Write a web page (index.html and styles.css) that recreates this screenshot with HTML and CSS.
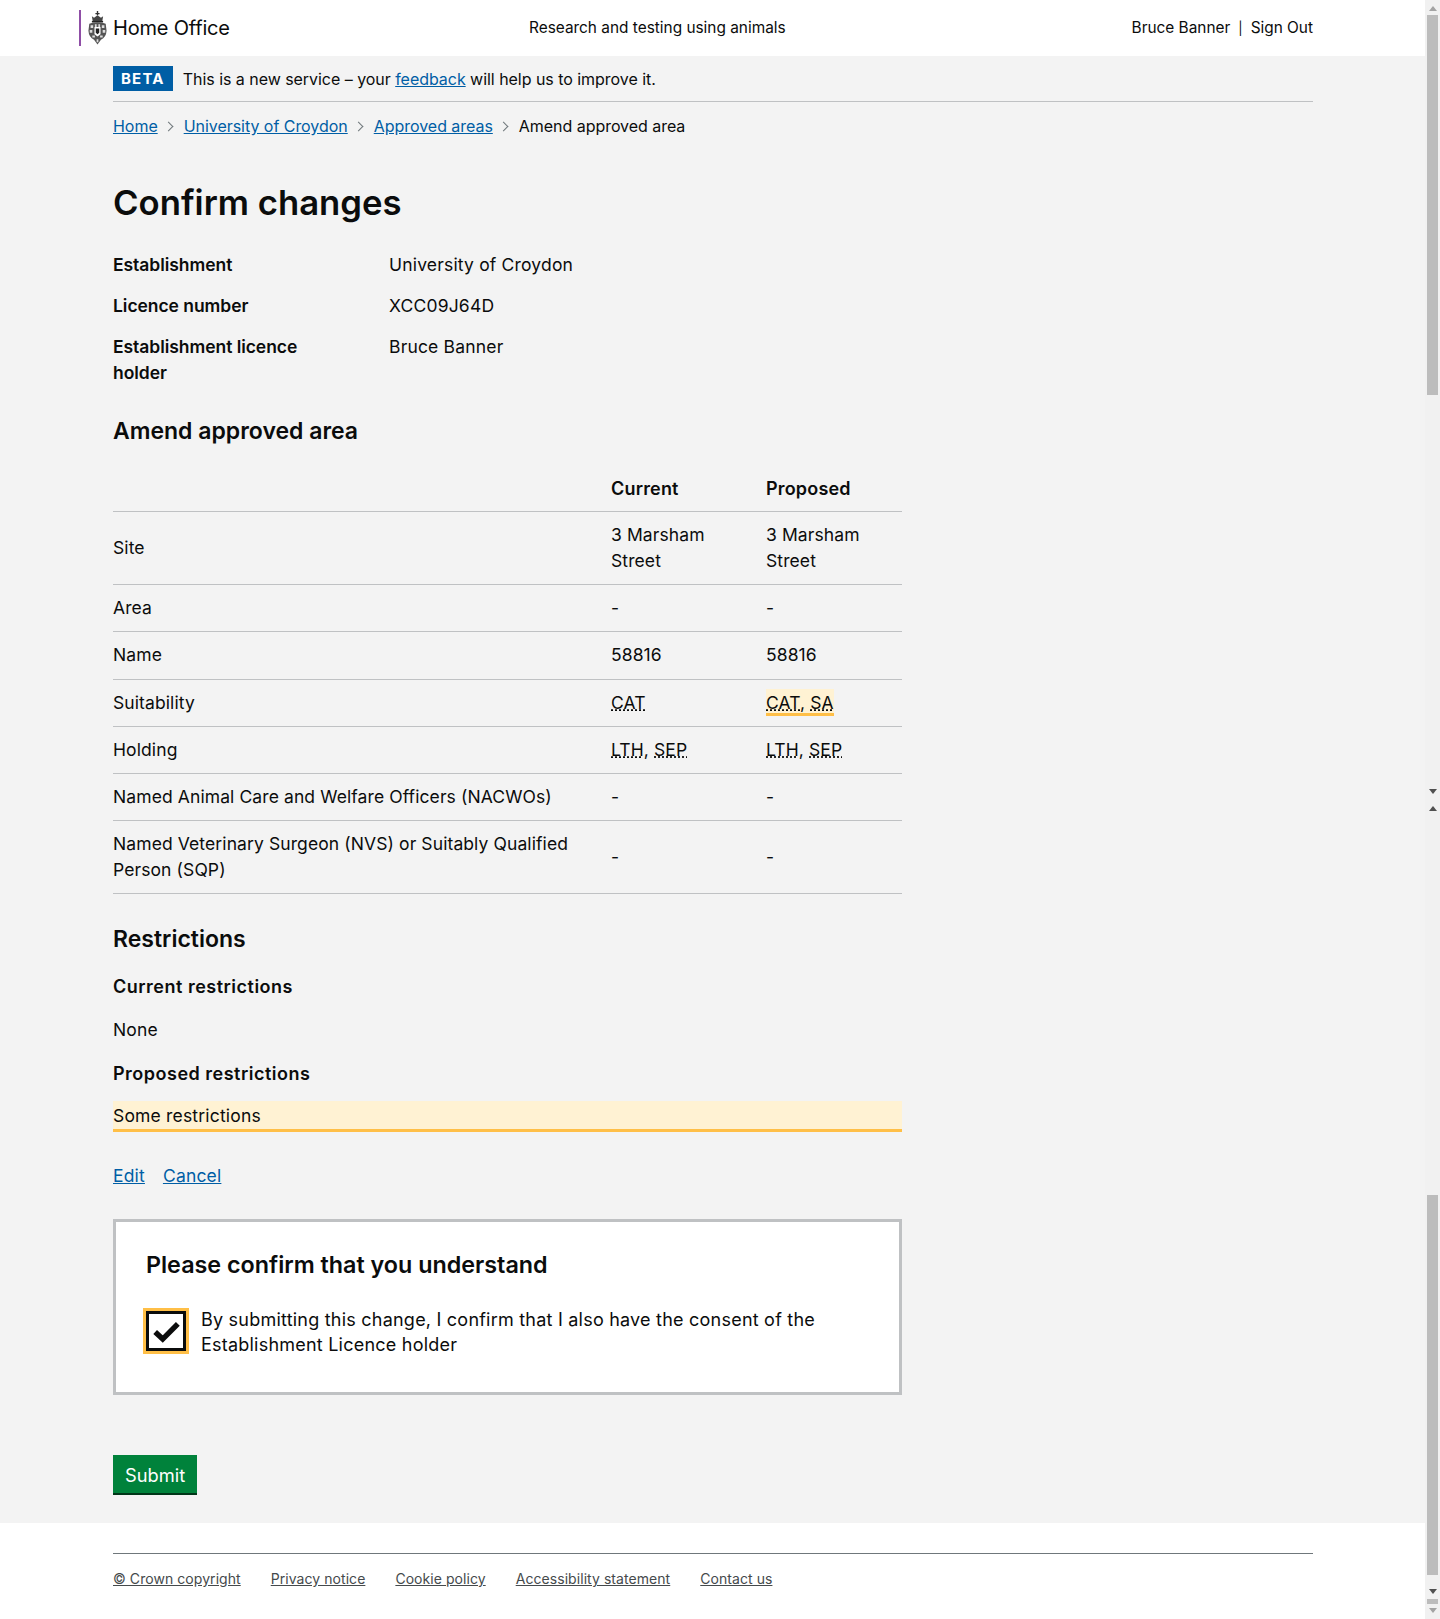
FILE: index.html
```html
<!DOCTYPE html>
<html lang="en">
<head>
  <meta charset="UTF-8" />
  <meta name="viewport" content="width=device-width, initial-scale=1.0"/>
  <title>Confirm changes</title>
  <link rel="stylesheet" href="styles.css">
</head>
<body>
<div class="page">

  <!-- HEADER -->
  <header class="site-header">
    <a href="#" class="logo">
      <svg class="crest" width="19" height="34" viewBox="0 0 22 36" preserveAspectRatio="none" aria-hidden="true">
        <path d="M10.2 0h1.6v2h1.6v1.4h-1.6v1.2h-1.6V3.4H8.6V2h1.6z" fill="#333"/>
        <path d="M4.5 5.5l2.5 1.6L11 4.6l4 2.5 2.5-1.6-1 5.5h-11z" fill="#444"/>
        <rect x="4.5" y="10.5" width="13" height="1.6" fill="#222"/>
        <path d="M1.5 13.5Q11 10.5 20.5 13.5L21.5 21Q21 28 15 30.5L11 35.5 7 30.5Q1 28 .5 21z" fill="#555"/>
        <path d="M3 15h3v3H3zm5-1h2v3H8zm4 0h2v3h-2zm4 1h3v3h-3zM2 20h3v3H2zm15 0h3v3h-3zM5 26h3v2H5zm9 0h3v2h-3zM10 30h2v3h-2z" fill="#ddd"/>
        <path d="M7.5 17h7v7.5L11 27l-3.500-2.500z" fill="#fff"/>
        <path d="M9 18.500h4v4.500l-2 1.500-2-1.500z" fill="#222"/>
      </svg>
      <span>Home Office</span>
    </a>
    <div class="service-name">Research and testing using animals</div>
    <div class="user-nav"><span>Bruce Banner</span><span class="sep">|</span><a href="#">Sign Out</a></div>
  </header>

  <main class="wrapper">
    <div class="phase-banner">
      <strong class="phase-tag">BETA</strong>
      <span>This is a new service – your <a href="#">feedback</a> will help us to improve it.</span>
    </div>

    <nav class="breadcrumbs">
      <a href="#">Home</a><i class="chevron"></i>
      <a href="#">University of Croydon</a><i class="chevron"></i>
      <a href="#">Approved areas</a><i class="chevron"></i>
      <span>Amend approved area</span>
    </nav>

    <h1>Confirm changes</h1>

    <dl class="details">
      <dt>Establishment</dt><dd>University of Croydon</dd>
      <dt>Licence number</dt><dd>XCC09J64D</dd>
      <dt>Establishment licence holder</dt><dd>Bruce Banner</dd>
    </dl>

    <div class="column">
      <h2>Amend approved area</h2>

      <table class="diff">
        <thead>
          <tr><th></th><th>Current</th><th>Proposed</th></tr>
        </thead>
        <tbody>
          <tr><td>Site</td><td>3 Marsham Street</td><td>3 Marsham Street</td></tr>
          <tr><td>Area</td><td>-</td><td>-</td></tr>
          <tr class="name-row"><td>Name</td><td>58816</td><td>58816</td></tr>
          <tr><td>Suitability</td><td><abbr>CAT</abbr></td><td><span class="highlight"><abbr>CAT</abbr>, <abbr>SA</abbr></span></td></tr>
          <tr><td>Holding</td><td><abbr>LTH</abbr>, <abbr>SEP</abbr></td><td><abbr>LTH</abbr>, <abbr>SEP</abbr></td></tr>
          <tr><td>Named Animal Care and Welfare Officers (NACWOs)</td><td>-</td><td>-</td></tr>
          <tr><td>Named Veterinary Surgeon (NVS) or Suitably Qualified Person (SQP)</td><td>-</td><td>-</td></tr>
        </tbody>
      </table>

      <h2 class="restrictions-title">Restrictions</h2>
      <h3>Current restrictions</h3>
      <p class="restriction">None</p>
      <h3>Proposed restrictions</h3>
      <p class="restriction-changed">Some restrictions</p>

      <div class="actions">
        <a href="#">Edit</a>
        <a href="#">Cancel</a>
      </div>

      <section class="declaration">
        <h2>Please confirm that you understand</h2>
        <label class="check">
          <span class="check-box">
            <svg width="27" height="23" viewBox="0 0 25 21" aria-hidden="true"><path d="M2 11l7 6.500L23 3.500" fill="none" stroke="#0b0c0c" stroke-width="5"/></svg>
          </span>
          <span class="check-text">By submitting this change, I confirm that I also have the consent of the Establishment Licence holder</span>
        </label>
      </section>

      <button type="submit" class="submit">Submit</button>
    </div>
  </main>

  <!-- FOOTER -->
  <footer class="site-footer">
    <div class="footer-links">
      <a href="#">© Crown copyright</a>
      <a href="#">Privacy notice</a>
      <a href="#">Cookie policy</a>
      <a href="#">Accessibility statement</a>
      <a href="#">Contact us</a>
    </div>
  </footer>
</div>

<!-- scrollbars as they appear in the capture -->
<div class="scroll-track">
  <i class="arrow up"></i>
  <div class="thumb thumb-top"></div>
  <i class="arrow down dark after-top"></i>
  <i class="arrow up dark"></i>
  <div class="thumb thumb-bottom"></div>
  <i class="arrow down dark"></i>
  <div class="thumb thumb-tiny"></div>
  <i class="arrow down"></i>
</div>
</body>
</html>
```

FILE: styles.css
```css
* {
  box-sizing: border-box;
}

body {
  font-family: 'Inter', sans-serif;
  font-size: 17.5px;
  letter-spacing: 0.18px;
  line-height: 26px;
  color: #0b0c0c;
  background-color: #f3f3f3;
  margin: 0;
  padding: 0;
  display: flex;
  height: 1619px;
  overflow: hidden;
}

a {
  color: #005ea5;
}

.page {
  flex: 1;
  min-width: 0;
  display: flex;
  flex-direction: column;
}

/* ===== HEADER ===== */
.site-header {
  height: 56px;
  background-color: white;
  padding: 0 112px 0 79px;
  display: grid;
  grid-template-columns: 450px auto 1fr;
  align-items: center;
  font-size: 15.4px;
  letter-spacing: 0;
}

.logo {
  display: flex;
  align-items: center;
  gap: 6px;
  height: 36px;
  border-left: 2px solid #8f4ea6;
  padding-left: 7px;
  color: #0b0c0c;
  text-decoration: none;
  font-size: 20px;
  letter-spacing: -0.2px;
}

.crest {
  flex: none;
}

.user-nav {
  display: flex;
  justify-content: flex-end;
  align-items: center;
  gap: 8px;
}

.user-nav .sep {
  font-size: 13px;
}

.user-nav a {
  color: #0b0c0c;
  text-decoration: none;
}

/* ===== MAIN ===== */
.wrapper {
  flex: 1;
  padding: 0 112px 0 113px;
}

.phase-banner {
  height: 46px;
  border-bottom: 1px solid #bfc1c3;
  display: flex;
  align-items: center;
  gap: 10px;
  font-size: 16px;
  letter-spacing: -0.04px;
}

.phase-tag {
  background-color: #005ea5;
  color: white;
  font-size: 15px;
  line-height: 25px;
  letter-spacing: 1.2px;
  padding: 0 8px;
  font-weight: 700;
}

.breadcrumbs {
  display: flex;
  align-items: center;
  padding-top: 11px;
  font-size: 16px;
  letter-spacing: -0.04px;
  line-height: 26px;
}

.chevron {
  width: 7px;
  height: 7px;
  margin: 0 12px 0 7px;
  border-top: 1px solid #6f777b;
  border-right: 1px solid #6f777b;
  transform: rotate(45deg);
}

h1 {
  font-size: 34.7px;
  letter-spacing: 0;
  line-height: 40px;
  font-weight: 600;
  margin: 43px 0 30px;
}

.details {
  display: grid;
  grid-template-columns: 276px 1fr;
  row-gap: 15px;
  margin: 0 0 30px;
}

.details dt {
  font-weight: 600;
  letter-spacing: -0.05px;
  width: 220px;
}

.details dd {
  margin: 0;
}

.column {
  width: 789px;
}

h2 {
  font-size: 23px;
  letter-spacing: 0;
  line-height: 30px;
  font-weight: 600;
  margin: 0;
}

h3 {
  font-size: 18px;
  letter-spacing: 0.5px;
  line-height: 26px;
  font-weight: 600;
  margin: 0;
}

/* ===== TABLE ===== */
.diff {
  width: 100%;
  border-collapse: collapse;
  margin-top: 19px;
}

.diff th {
  text-align: left;
  font-size: 18px;
  font-weight: 600;
  padding: 11px 20px 9px 0;
  border-bottom: 1px solid #bfc1c3;
}

.diff td {
  padding: 10px 20px 10px 0;
  border-bottom: 1px solid #bfc1c3;
  letter-spacing: 0.1px;
}

.diff .name-row td {
  padding-bottom: 11px;
}

.diff td:first-child {
  width: 498px;
}

.diff td:nth-child(2) {
  width: 155px;
}

abbr {
  text-decoration: underline dotted;
}

.highlight {
  background-color: #fff2d3;
  border-bottom: 3px solid #ffbf47;
  padding: 3px 0 0;
}

/* ===== RESTRICTIONS ===== */
.restrictions-title {
  margin-top: 30px;
}

.restrictions-title + h3 {
  margin-top: 20px;
}

.restriction {
  margin: 17px 0 18px;
}

.restriction-changed {
  margin: 14px 0 0;
  background-color: #fff2d3;
  border-bottom: 3px solid #ffbf47;
  padding: 2px 0 0;
}

.actions {
  display: flex;
  gap: 18px;
  margin-top: 31px;
}

.declaration {
  margin-top: 30px;
  background-color: white;
  border: 3px solid #bfc1c3;
  padding: 28px 30px 30px;
  height: 176px;
}

.declaration h2 {
  font-size: 23.3px;
}

.check {
  display: flex;
  align-items: center;
  gap: 15px;
  margin-top: 25px;
  font-size: 18px;
  letter-spacing: 0.22px;
  line-height: 25px;
}

.check-text {
  padding-top: 2px;
}

.check-box {
  flex: none;
  width: 40px;
  height: 40px;
  border: 3px solid #0b0c0c;
  outline: 3px solid #ffbf47;
  display: flex;
  align-items: center;
  justify-content: center;
}

.submit {
  display: block;
  margin-top: 60px;
  background-color: #00823b;
  color: white;
  border: none;
  border-bottom: 2px solid #003618;
  font-family: inherit;
  font-size: 18.3px;
  line-height: 26px;
  padding: 7px 12px 5px;
  cursor: pointer;
}

/* ===== FOOTER ===== */
.site-footer {
  height: 96px;
  background-color: white;
  padding: 30px 112px 0 113px;
}

.footer-links {
  border-top: 1px solid #6f777b;
  padding-top: 12px;
  display: flex;
  gap: 30px;
  font-size: 14px;
  letter-spacing: 0.06px;
}

.footer-links a {
  color: #454a4c;
}

/* ===== SCROLLBARS ===== */
.scroll-track {
  flex: none;
  width: 15px;
  background-color: #f1f1f1;
  display: flex;
  flex-direction: column;
  align-items: center;
  padding-top: 6px;
}

.thumb {
  width: 11px;
  background-color: #bcbcbc;
}

.thumb-top {
  height: 380px;
  margin-top: 4px;
}

.thumb-bottom {
  height: 380px;
  margin-top: 384px;
}

.thumb-tiny {
  height: 5px;
  margin-top: 5px;
}

.arrow {
  width: 0;
  height: 0;
  border-left: 4px solid transparent;
  border-right: 4px solid transparent;
}

.arrow.up {
  border-bottom: 5px solid #a3a3a3;
}

.arrow.down {
  border-top: 5px solid #a3a3a3;
  margin-top: 4px;
}

.arrow.up.dark {
  border-bottom-color: #505050;
  margin-top: 12px;
}

.arrow.down.dark {
  border-top-color: #505050;
  margin-top: 14px;
}

.arrow.down.dark.after-top {
  margin-top: 394px;
}
```
